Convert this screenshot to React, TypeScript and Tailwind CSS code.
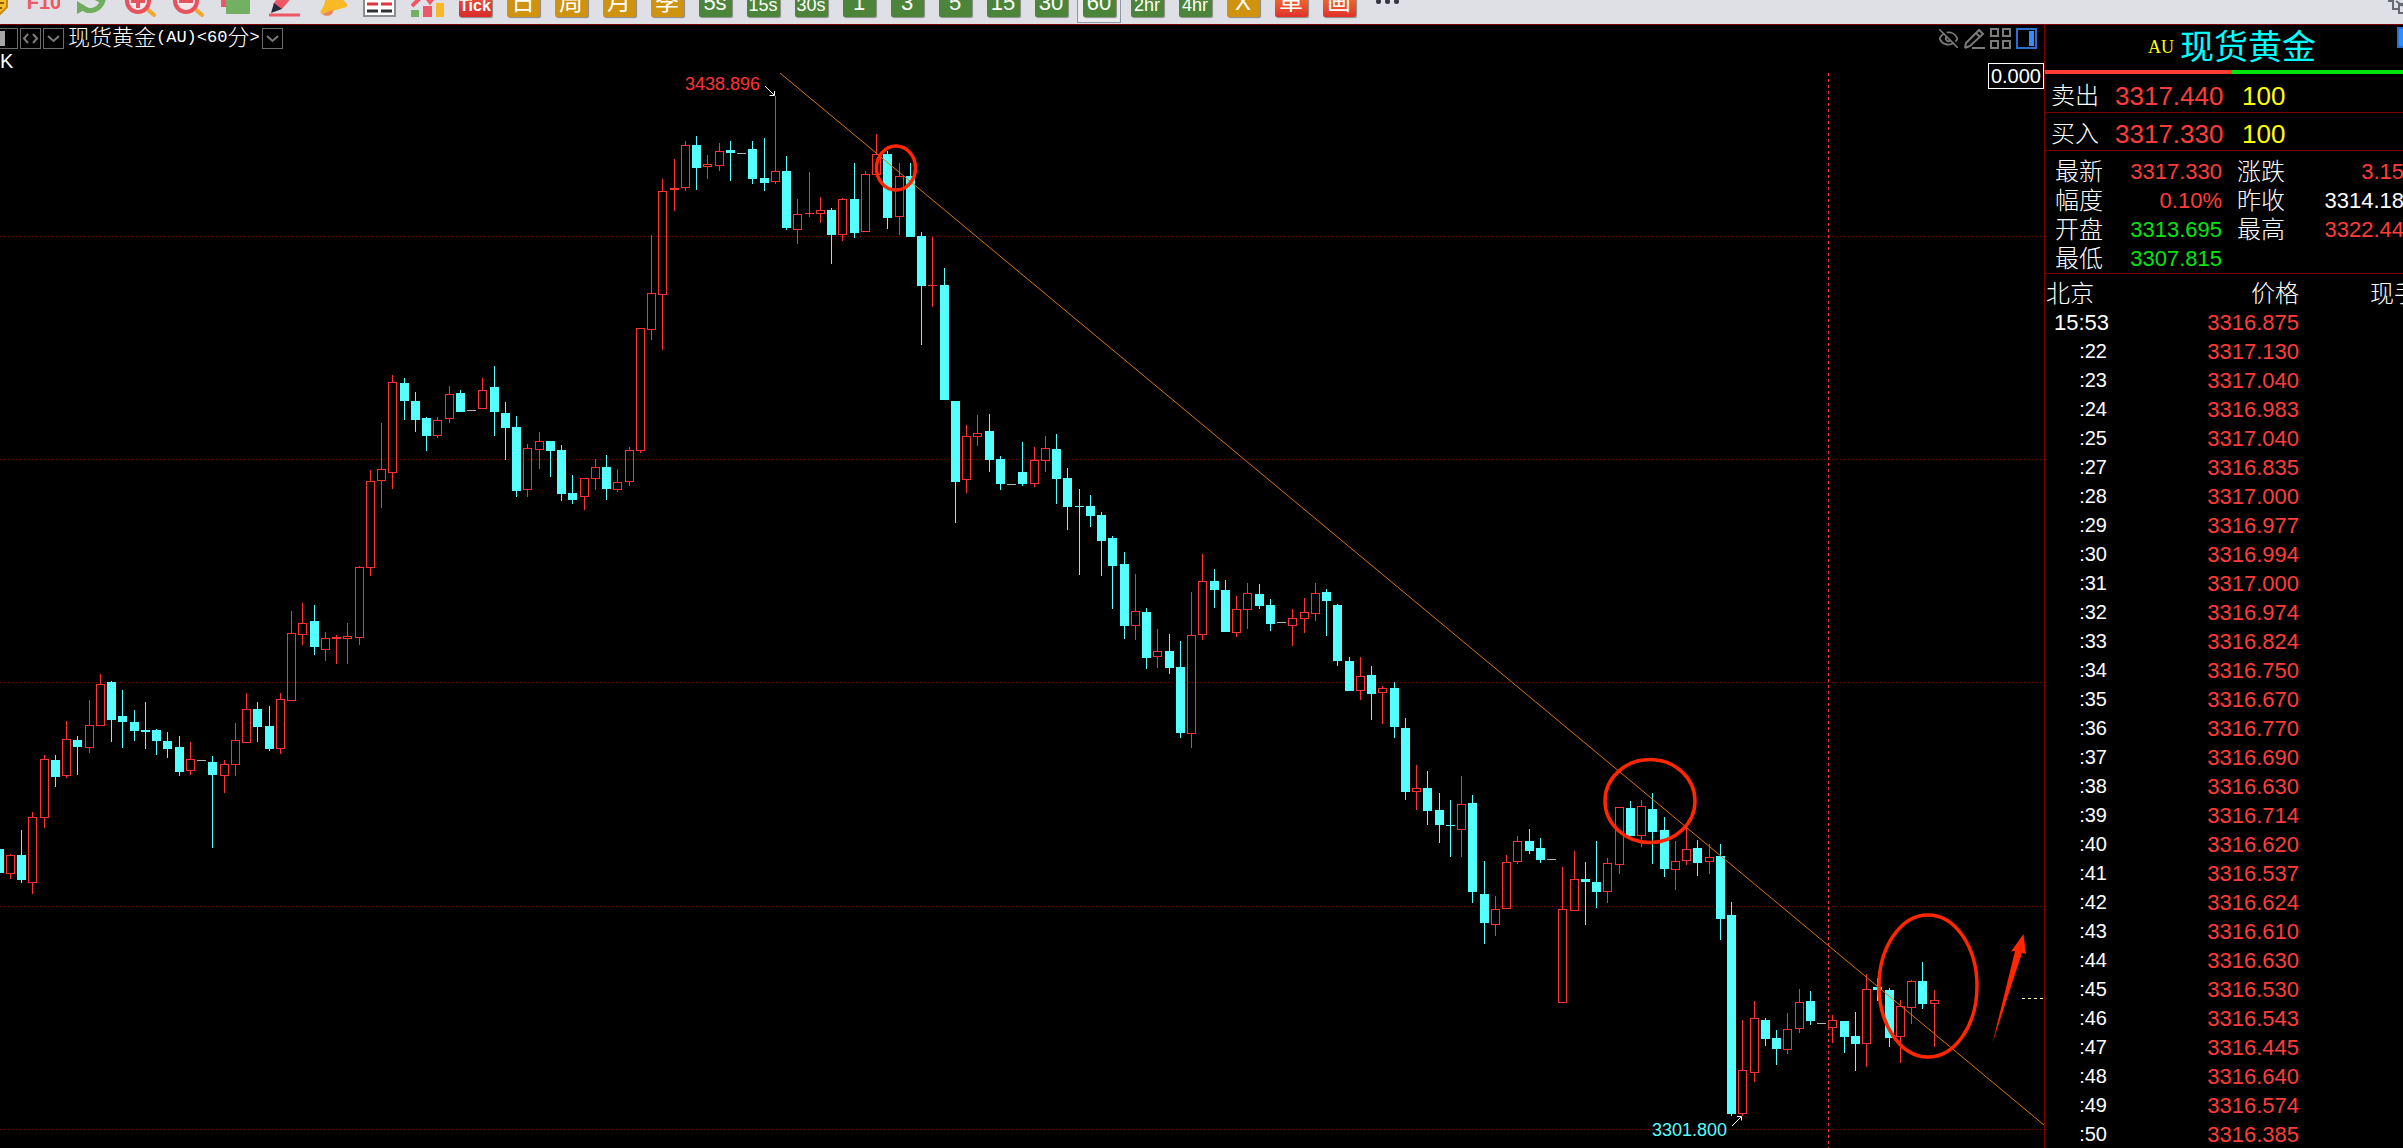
import React from 'react';
import { EyeOff } from 'lucide-react';
import clsx from 'clsx';

type Kind = 'up' | 'down' | 'flat';
// kind, high, body top, body bottom, low
type Candle = [Kind, number, number, number, number];

const CANDLES: Candle[] = [
    ['down', 849, 849, 873, 873], ['up', 854, 855, 874, 879], ['down', 830, 855, 880, 883], ['up', 812, 817, 883, 894],
    ['up', 755, 759, 818, 828], ['down', 755, 760, 777, 787], ['up', 721, 739, 776, 778], ['down', 736, 740, 747, 775],
    ['up', 700, 725, 748, 753], ['up', 674, 684, 726, 726], ['down', 681, 682, 720, 742], ['down', 690, 716, 722, 748],
    ['down', 710, 722, 731, 741], ['down', 702, 730, 732, 749], ['down', 729, 730, 741, 755], ['down', 732, 741, 749, 758],
    ['down', 736, 747, 772, 776], ['up', 742, 759, 771, 775], ['flat', 760, 760, 761, 761], ['down', 756, 762, 775, 848],
    ['up', 760, 764, 776, 793], ['up', 723, 740, 765, 776], ['up', 693, 709, 743, 743], ['down', 702, 709, 727, 742],
    ['down', 706, 726, 749, 751], ['up', 693, 699, 749, 754], ['up', 611, 633, 701, 701], ['up', 603, 623, 635, 645],
    ['down', 605, 621, 647, 655], ['up', 632, 638, 650, 661], ['up', 635, 637, 639, 664], ['up', 623, 636, 639, 664],
    ['up', 566, 567, 638, 645], ['up', 470, 481, 568, 576], ['up', 423, 469, 481, 508], ['up', 375, 382, 473, 489],
    ['down', 378, 383, 401, 420], ['down', 392, 401, 420, 432], ['down', 417, 418, 436, 451], ['up', 417, 420, 436, 438],
    ['up', 386, 394, 419, 423], ['down', 390, 393, 412, 412], ['flat', 410, 410, 411, 411], ['up', 378, 390, 409, 409],
    ['down', 366, 387, 412, 436], ['down', 402, 413, 428, 460], ['down', 416, 427, 491, 497], ['up', 444, 448, 490, 497],
    ['up', 432, 441, 450, 469], ['down', 441, 441, 451, 477], ['down', 445, 450, 494, 501], ['down', 475, 493, 500, 504],
    ['up', 478, 478, 497, 510], ['up', 459, 467, 479, 490], ['down', 455, 467, 489, 500], ['up', 469, 482, 490, 492],
    ['up', 447, 450, 482, 486], ['up', 328, 328, 451, 453], ['up', 235, 293, 330, 340], ['up', 179, 191, 295, 350],
    ['up', 159, 188, 190, 211], ['up', 141, 145, 188, 191], ['down', 136, 145, 168, 190], ['up', 155, 164, 167, 179],
    ['up', 143, 151, 166, 171], ['down', 141, 150, 153, 181], ['flat', 153, 153, 154, 154], ['down', 141, 149, 179, 184],
    ['down', 138, 178, 183, 191], ['up', 96, 171, 182, 184], ['down', 156, 171, 228, 230], ['up', 199, 214, 230, 244],
    ['up', 172, 213, 214, 217], ['up', 197, 210, 214, 223], ['down', 208, 210, 235, 264], ['up', 198, 199, 235, 241],
    ['down', 163, 199, 233, 238], ['up', 171, 174, 232, 232], ['up', 134, 154, 175, 175], ['down', 151, 154, 218, 229],
    ['up', 163, 176, 217, 235], ['down', 163, 176, 237, 237], ['down', 232, 236, 286, 345], ['up', 237, 285, 286, 307],
    ['down', 268, 285, 400, 400], ['down', 401, 401, 482, 523], ['up', 425, 436, 480, 493], ['up', 415, 433, 437, 446],
    ['down', 414, 431, 460, 472], ['down', 456, 459, 484, 490], ['flat', 484, 484, 485, 485], ['down', 442, 472, 484, 486],
    ['up', 447, 460, 484, 487], ['up', 436, 448, 461, 472], ['down', 434, 449, 479, 504], ['down', 468, 478, 507, 530],
    ['down', 489, 506, 507, 575], ['down', 495, 506, 516, 527], ['down', 512, 515, 541, 576], ['down', 536, 538, 566, 609],
    ['down', 552, 564, 626, 639], ['up', 574, 611, 626, 640], ['down', 608, 612, 658, 669], ['up', 629, 651, 657, 668],
    ['down', 634, 651, 668, 674], ['down', 641, 667, 733, 738], ['up', 592, 635, 734, 748], ['up', 554, 581, 635, 640],
    ['down', 569, 581, 590, 608], ['down', 580, 590, 632, 632], ['up', 596, 609, 633, 637], ['up', 583, 593, 610, 629],
    ['down', 584, 594, 606, 609], ['down', 599, 605, 624, 631], ['flat', 622, 622, 623, 623], ['up', 609, 618, 626, 646],
    ['up', 598, 612, 619, 633], ['up', 583, 593, 614, 621], ['down', 589, 592, 601, 636], ['down', 604, 605, 661, 666],
    ['down', 657, 661, 691, 691], ['up', 657, 676, 691, 700], ['down', 666, 675, 694, 720], ['up', 686, 688, 693, 724],
    ['down', 682, 688, 727, 738], ['down', 718, 728, 792, 800], ['up', 765, 788, 792, 810], ['down', 771, 788, 811, 825],
    ['down', 793, 810, 825, 843], ['down', 800, 825, 826, 857], ['up', 776, 804, 830, 857], ['down', 795, 803, 892, 903],
    ['down', 861, 894, 923, 944], ['up', 896, 909, 925, 936], ['up', 855, 862, 909, 909], ['up', 836, 841, 862, 864],
    ['down', 829, 841, 851, 854], ['down', 838, 848, 860, 863], ['flat', 859, 859, 860, 860], ['up', 867, 909, 1003, 1003],
    ['up', 851, 879, 911, 911], ['down', 862, 879, 882, 925], ['down', 841, 882, 892, 908], ['up', 858, 863, 892, 903],
    ['up', 807, 807, 865, 874], ['down', 801, 808, 836, 836], ['up', 800, 806, 836, 847], ['down', 793, 809, 832, 864],
    ['down', 817, 830, 869, 877], ['up', 841, 861, 870, 890], ['up', 826, 849, 861, 865], ['down', 840, 848, 863, 876],
    ['up', 844, 857, 862, 874], ['down', 844, 856, 919, 940], ['down', 902, 915, 1114, 1116], ['up', 1020, 1070, 1114, 1116],
    ['up', 1001, 1018, 1073, 1082], ['down', 1018, 1020, 1039, 1046], ['down', 1030, 1038, 1049, 1065], ['up', 1013, 1029, 1050, 1054],
    ['up', 989, 1002, 1029, 1033], ['down', 991, 1001, 1021, 1025], ['flat', 1023, 1023, 1024, 1024], ['up', 1015, 1020, 1028, 1043],
    ['down', 1021, 1021, 1037, 1053], ['down', 1012, 1036, 1044, 1071], ['up', 974, 989, 1044, 1067], ['down', 978, 987, 990, 1001],
    ['down', 988, 990, 1038, 1047], ['up', 1000, 1006, 1037, 1063], ['up', 980, 981, 1008, 1024], ['down', 962, 981, 1004, 1009],
    ['up', 990, 1000, 1004, 1047],
];

const CANDLE_STEP = 11.25;
const GRID_LINES = [236, 459, 682, 906, 1129];

const TICKS: [string, string][] = [
    ['15:53', '3316.875'], [':22', '3317.130'], [':23', '3317.040'], [':24', '3316.983'], [':25', '3317.040'],
    [':27', '3316.835'], [':28', '3317.000'], [':29', '3316.977'], [':30', '3316.994'], [':31', '3317.000'],
    [':32', '3316.974'], [':33', '3316.824'], [':34', '3316.750'], [':35', '3316.670'], [':36', '3316.770'],
    [':37', '3316.690'], [':38', '3316.630'], [':39', '3316.714'], [':40', '3316.620'], [':41', '3316.537'],
    [':42', '3316.624'], [':43', '3316.610'], [':44', '3316.630'], [':45', '3316.530'], [':46', '3316.543'],
    [':47', '3316.445'], [':48', '3316.640'], [':49', '3316.574'], [':50', '3316.385'],
];

const PERIODS = [
    { label: 'Tick', style: 'bg-linear-to-b from-[#f0603c] to-[#d92a2a]', text: 'text-[16px] font-bold' },
    { label: '日', style: 'bg-[#cf930f]', text: 'text-[24px]' },
    { label: '周', style: 'bg-[#cf930f]', text: 'text-[24px]' },
    { label: '月', style: 'bg-[#cf930f]', text: 'text-[24px]' },
    { label: '季', style: 'bg-[#cf930f]', text: 'text-[24px]' },
    { label: '5s', style: 'bg-[#4c8539]', text: 'text-[22px]' },
    { label: '15s', style: 'bg-[#4c8539]', text: 'text-[18px]' },
    { label: '30s', style: 'bg-[#4c8539]', text: 'text-[18px]' },
    { label: '1', style: 'bg-[#4c8539]', text: 'text-[22px]' },
    { label: '3', style: 'bg-[#4c8539]', text: 'text-[22px]' },
    { label: '5', style: 'bg-[#4c8539]', text: 'text-[22px]' },
    { label: '15', style: 'bg-[#4c8539]', text: 'text-[22px]' },
    { label: '30', style: 'bg-[#4c8539]', text: 'text-[22px]' },
    { label: '60', style: 'bg-[#4c8539]', text: 'text-[22px]', active: true },
    { label: '2hr', style: 'bg-[#4c8539]', text: 'text-[18px]' },
    { label: '4hr', style: 'bg-[#4c8539]', text: 'text-[18px]' },
    { label: 'X', style: 'bg-[#cf930f]', text: 'text-[24px]' },
    { label: '單', style: 'bg-linear-to-b from-[#f58a2c] to-[#e02f2c]', text: 'text-[24px]' },
    { label: '画', style: 'bg-linear-to-b from-[#f58a2c] to-[#e02f2c]', text: 'text-[24px]' },
];

const TOOLS: { name: string; icon: React.ReactNode }[] = [
    {
        name: '文件',
        icon: (
            <>
                <path d="M4 4h24v19L18 33H4z" fill="#f9bd2b" />
                <path d="M28 16v7L18 33" fill="none" stroke="#c98a12" strokeWidth="2" />
                <path d="M18 19h7M18 24h5" stroke="#8a5a10" strokeWidth="2" />
            </>
        ),
    },
    {
        name: 'F10',
        icon: (
            <text x="17" y="25" textAnchor="middle" fill="#ee5763" fontSize="20" fontWeight="bold">
                F10
            </text>
        ),
    },
    {
        name: '刷新',
        icon: (
            <>
                <path d="M6 22c6 7 16 6 21-3" fill="none" stroke="#6fae5c" strokeWidth="5" />
                <path d="M2 17l11 7-11 6zM18 15h13l-2 6z" fill="#6fae5c" />
                <path d="M5 12a12 12 0 0 1 20-4" fill="none" stroke="#6fae5c" strokeWidth="5" />
            </>
        ),
    },
    {
        name: '放大',
        icon: (
            <>
                <path d="M23 24l8 7" stroke="#f0a92d" strokeWidth="4" strokeLinecap="round" />
                <circle cx="15" cy="17" r="11" fill="#f2e7ea" stroke="#e8525e" strokeWidth="4" />
                <path d="M15 10v14M8 17h14" stroke="#e8525e" strokeWidth="4" />
            </>
        ),
    },
    {
        name: '缩小',
        icon: (
            <>
                <path d="M23 24l8 7" stroke="#f0a92d" strokeWidth="4" strokeLinecap="round" />
                <circle cx="15" cy="17" r="11" fill="#f2e7ea" stroke="#e8525e" strokeWidth="4" />
                <path d="M8 17h14" stroke="#e8525e" strokeWidth="4" />
            </>
        ),
    },
    {
        name: '复制',
        icon: (
            <>
                <rect x="2" y="2" width="22" height="21" fill="#ee5763" />
                <rect x="7" y="8" width="24" height="22" rx="1" fill="#74b062" />
            </>
        ),
    },
    {
        name: '画线',
        icon: (
            <>
                <path d="M22 0l9 6-16 19-9-5z" fill="#ee5763" />
                <path d="M7 19l8 6-11 4z" fill="#23293b" />
                <path d="M2 31h31" stroke="#ee5763" strokeWidth="3" />
            </>
        ),
    },
    {
        name: '预警',
        icon: (
            <>
                <path d="M15 2l17 18c1 3-2 4-4 4L7 30c-2-1-2-3 0-5 4-6 3-14 8-23z" fill="#f9b826" />
                <path d="M7 30c5 4 12 1 11-4z" fill="#e8885a" />
            </>
        ),
    },
    {
        name: '表格',
        icon: (
            <>
                <rect x="1" y="1" width="31" height="31" fill="#fff" stroke="#8b8d92" strokeWidth="2" />
                <path d="M4 12h11M18 12h11M4 20h11M18 20h11" stroke="#e0383f" strokeWidth="3" />
                <path d="M4 27h11M18 27h11" stroke="#30333a" strokeWidth="3" />
            </>
        ),
    },
    {
        name: '指标',
        icon: (
            <>
                <rect x="0" y="26" width="8" height="7" fill="#74b062" />
                <rect x="12" y="22" width="9" height="11" fill="#ee5763" />
                <rect x="25" y="19" width="8" height="14" fill="#f9b826" />
                <path d="M1 22L13 10l6 8 9-12" fill="none" stroke="#ee5763" strokeWidth="4" />
            </>
        ),
    },
];

const Toolbar = () => (
    <nav className="h-6 shrink-0 overflow-hidden bg-[#dfe0e5] flex items-end justify-between">
        <div className="flex items-end -ml-[29px] h-12">
            {TOOLS.map((tool) => (
                <button key={tool.name} aria-label={tool.name} className="w-12 h-12 pb-[7px] shrink-0 flex items-end justify-center">
                    <svg viewBox="0 0 33 33" className="size-[33px]">{tool.icon}</svg>
                </button>
            ))}
            {PERIODS.map((p) => (
                <button
                    key={p.label}
                    className={clsx(
                        'w-12 h-12 shrink-0 flex items-end justify-center pb-[7px]',
                        p.active && 'bg-[#e9eaee] shadow-[inset_0_-1px_0_#dfe0e5,inset_2px_0_0_#dfe0e5,inset_-2px_0_0_#dfe0e5,inset_0_-2px_0_#8d9aa5,inset_3px_0_0_#8d9aa5,inset_-3px_0_0_#8d9aa5]'
                    )}
                >
                    <span
                        className={clsx(
                            'size-[33px] pb-[3px] rounded-xs flex items-end justify-center leading-none text-white shadow-[1px_1px_1px_#8a8a8a]',
                            p.style,
                            p.text
                        )}
                    >
                        {p.label}
                    </span>
                </button>
            ))}
            <button aria-label="更多" className="w-12 h-12 pb-5 flex items-end justify-center gap-1">
                <span className="size-[5px] rounded-full bg-[#33363c]" />
                <span className="size-[5px] rounded-full bg-[#33363c]" />
                <span className="size-[5px] rounded-full bg-[#33363c]" />
            </button>
        </div>
        <button aria-label="窗口" className="h-6 w-[15px] overflow-hidden">
            <svg viewBox="0 0 15 24" className="w-[15px] h-6" fill="none" stroke="#66696f" strokeWidth="2">
                <path d="M0 1h5v8h6M8 1l7 5M15 4h-4v9h4" />
            </svg>
        </button>
    </nav>
);

const BoxButton = ({ label, children }: { label: string; children: React.ReactNode }) => (
    <button aria-label={label} className="size-[21px] shrink-0 border border-[#6b6b6b]">
        <svg viewBox="0 0 19 19" className="size-[19px]" fill="none" stroke="#7b7b7b" strokeWidth="2">
            {children}
        </svg>
    </button>
);

const ChartHeader = () => (
    <header className="relative h-12 pt-0.5 text-white">
        <div className="flex items-center justify-between h-[22px] pr-[7px]">
            <div className="flex items-center gap-0.5 -ml-[3px]">
                <BoxButton label="面板">
                    <rect x="2" y="2" width="5" height="15" fill="#a8a8a8" stroke="none" />
                </BoxButton>
                <BoxButton label="切换">
                    <path d="M7 5L3 9.500l4 4.500M12 5l4 4.500-4 4.500" />
                </BoxButton>
                <BoxButton label="展开">
                    <path d="M4 7l5.500 5L15 7" />
                </BoxButton>
                <h1 className="flex items-center pl-0.5 text-[22px] leading-[22px] font-light whitespace-nowrap">
                    现货黄金
                    <span className="text-[17px] font-['Liberation_Mono',monospace]">(AU)&lt;60</span>分
                    <span className="text-[17px] font-['Liberation_Mono',monospace]">&gt;</span>
                </h1>
                <BoxButton label="周期">
                    <path d="M4 7l5.500 5L15 7" />
                </BoxButton>
            </div>
            <div className="flex items-center gap-[5px] text-[#7b7b7b]">
                <button aria-label="隐藏"><EyeOff size={21} strokeWidth={2} /></button>
                <button aria-label="画笔">
                    <svg viewBox="0 0 21 21" className="size-[21px]" fill="none" stroke="currentColor" strokeWidth="2">
                        <path d="M1 20l1-5L15 2l4 4L6 18l-5 2M12 5l4 4M8 20h13" />
                    </svg>
                </button>
                <button aria-label="布局">
                    <svg viewBox="0 0 21 21" className="size-[21px]" fill="none" stroke="currentColor" strokeWidth="2">
                        <path d="M1 1h7v7H1zM13 1h7v7h-7zM1 13h7v7H1zM13 13h7v7h-7z" />
                    </svg>
                </button>
                <button aria-label="侧栏">
                    <svg viewBox="0 0 21 21" className="size-[21px]">
                        <rect x="1" y="1" width="19" height="19" fill="#000" stroke="#2a6fd0" strokeWidth="2" />
                        <rect x="13" y="3" width="5" height="15" fill="#2f8fff" />
                    </svg>
                </button>
            </div>
        </div>
        <div className="text-[20px] leading-[24px]">K</div>
        <output className="absolute right-0 top-[38px] h-[26px] px-0.5 border border-white bg-black text-[20px] leading-6">0.000</output>
    </header>
);

const CandleShape = ({ candle, index }: { candle: Candle; index: number }) => {
    const [kind, high, top, bottom, low] = candle;
    const x = Math.floor(CANDLE_STEP * index - 1);

    if (kind === 'flat') {
        return <rect x={x - 4} y={top} width={9} height={1} fill="#b4b4b4" />;
    }
    if (kind === 'down') {
        return (
            <g fill="#54ffff">
                <rect x={x} y={high} width={1} height={low - high} />
                <rect x={x - 4} y={top} width={9} height={bottom - top} />
            </g>
        );
    }
    return (
        <g fill="#ff3232">
            <rect x={x} y={high} width={1} height={top - high} />
            <rect x={x} y={bottom} width={1} height={low - bottom} />
            {bottom - top < 3 ? (
                <rect x={x - 4} y={top} width={9} height={bottom - top} />
            ) : (
                <rect x={x - 3.5} y={top + 0.5} width={8} height={bottom - top - 1} fill="none" stroke="#ff3232" />
            )}
        </g>
    );
};

const CandleChart = () => (
    <svg viewBox="0 73 2044 1075" className="block w-full h-auto" role="img" aria-label="现货黄金 60分">
        <g shapeRendering="crispEdges">
            {GRID_LINES.map((y) => (
                <line key={y} x1="0" x2="2044" y1={y + 0.5} y2={y + 0.5} stroke="#800000" strokeDasharray="1 3" />
            ))}
            <line x1="1828.5" x2="1828.5" y1="73" y2="1148" stroke="#ff3232" strokeDasharray="3 3" />
            {CANDLES.map((candle, i) => (
                <CandleShape key={i} candle={candle} index={i} />
            ))}
            <line x1="2022" x2="2044" y1="998.5" y2="998.5" stroke="#ffffa0" strokeDasharray="3 3" />
        </g>
        <line x1="780" y1="73" x2="2044" y2="1125" stroke="#d9730d" />

        <g fontSize="18">
            <text x="685" y="90" fill="#ff3232">3438.896</text>
            <text x="1652" y="1136" fill="#54ffff">3301.800</text>
        </g>
        <g fill="none" stroke="#fff" strokeWidth="1">
            <path d="M765 86l9 9M774.5 91v4.500h-5" />
            <path d="M1732 1126l9-9M1737 1116.500h4.500v4" />
        </g>

        {/* marks drawn by hand over the trend line */}
        <g fill="none" stroke="#ff2600" strokeWidth="3.500">
            <ellipse cx="896" cy="168" rx="19.500" ry="22" />
            <ellipse cx="1650" cy="801" rx="45" ry="41.500" />
            <ellipse cx="1928" cy="986" rx="49" ry="71" />
        </g>
        <path d="M1992.500 1043L2015 951l-4 .5L2023.500 934l2.500 20-4-1z" fill="#ff2600" />
    </svg>
);

const QuoteRow = ({ label, price }: { label: string; price: string }) => (
    <div className="flex items-center h-[38px] pt-1 pl-1.5 border-b border-[#800000] text-[26px] leading-none">
        <span className="w-16 text-[24px] font-light text-white">{label}</span>
        <span className="w-[108px] text-right text-[#ff3c38]">{price}</span>
        <span className="pl-[19px] text-[#ffff00]">100</span>
    </div>
);

const InfoItem = ({ label, value, color }: { label: string; value: string; color: string }) => (
    <div className="flex justify-between">
        <dt className="text-[24px] font-light text-white">{label}</dt>
        <dd className={color}>{value}</dd>
    </div>
);

const QuotePanel = () => (
    <aside className="w-[359px] shrink-0 overflow-hidden border-l border-[#800000]">
        <div className="flex items-center h-[45px] pl-[103px]">
            <span className="w-8 text-[18px] text-[#ffff00] font-['Liberation_Serif',serif]">AU</span>
            <h2 className="flex-1 text-[34px] leading-[45px] text-[#00ffff]">现货黄金</h2>
            <button aria-label="侧栏" className="self-start mt-0.5 w-1.5 h-[21px] border-2 border-r-0 border-[#2a6fd0] bg-[#2f8fff]" />
        </div>
        <div className="flex h-1 mb-px">
            <div className="w-[187px] bg-[#ff3c38]" />
            <div className="flex-1 bg-[#00e60f]" />
        </div>
        <QuoteRow label="卖出" price="3317.440" />
        <QuoteRow label="买入" price="3317.330" />
        <dl className="grid grid-cols-[167px_167px] gap-x-[15px] pl-2.5 pt-1.5 border-b border-[#800000] text-[22px] leading-[29px]">
            <InfoItem label="最新" value="3317.330" color="text-[#ff3c38]" />
            <InfoItem label="涨跌" value="3.15" color="text-[#ff3c38]" />
            <InfoItem label="幅度" value="0.10%" color="text-[#ff3c38]" />
            <InfoItem label="昨收" value="3314.18" color="text-white" />
            <InfoItem label="开盘" value="3313.695" color="text-[#00e60f]" />
            <InfoItem label="最高" value="3322.44" color="text-[#ff3c38]" />
            <InfoItem label="最低" value="3307.815" color="text-[#00e60f]" />
        </dl>
        <table className="table-fixed w-[373px] mt-[5px] text-[22px] leading-[29px]">
            <thead>
                <tr className="h-[29px] text-[24px] text-white">
                    <th className="w-16 p-0 pl-px text-left font-light">北京</th>
                    <th className="w-[190px] p-0 text-right font-light">价格</th>
                    <th className="p-0 text-right font-light">现手</th>
                </tr>
            </thead>
            <tbody>
                {TICKS.map(([time, price]) => (
                    <tr key={time} className="h-[29px]">
                        <td className={clsx('p-0 text-right text-white', time.length < 5 && 'pr-0.5 text-[20px]')}>{time}</td>
                        <td className="p-0 text-right text-[#ff3c38]">{price}</td>
                        <td className="p-0" />
                    </tr>
                ))}
            </tbody>
        </table>
    </aside>
);

const App: React.FC = () => {
    return (
        <div className="h-screen flex flex-col overflow-hidden bg-black font-['Liberation_Sans','Noto_Sans_CJK_SC',sans-serif]">
            <Toolbar />
            <div className="flex flex-1 min-h-0 border-t border-[#800000]">
                <main className="flex-1 min-w-0 overflow-hidden">
                    <ChartHeader />
                    <CandleChart />
                </main>
                <QuotePanel />
            </div>
        </div>
    );
};

export default App;
